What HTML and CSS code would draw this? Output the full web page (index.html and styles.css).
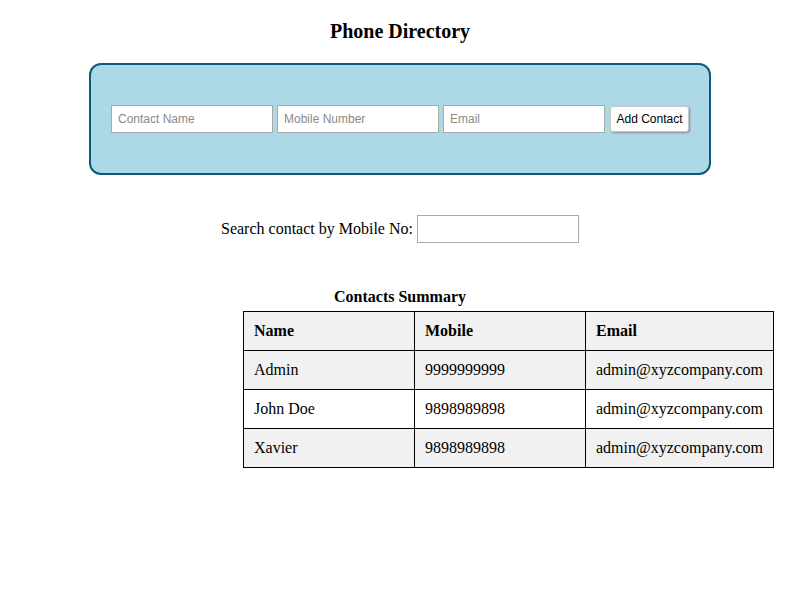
FILE: index.html
```html
<!DOCTYPE html>
<html>
<head>
<meta charset="utf-8">
<link rel="stylesheet" href="styles.css">
</head>
<body>
<h1 class="title">Phone Directory</h1>
<div class="form-box">
  <input class="field" type="text" placeholder="Contact Name">
  <input class="field" type="text" placeholder="Mobile Number">
  <input class="field" type="text" placeholder="Email">
  <button class="add-btn">Add Contact</button>
</div>
<div class="search-row">
  <label class="search-label">Search contact by Mobile No:</label>
  <input class="search-input" type="text">
</div>
<div class="summary">
  <div class="caption">Contacts Summary</div>
  <table class="contacts">
    <thead>
      <tr class="head-row"><th class="c-name">Name</th><th class="c-mobile">Mobile</th><th>Email</th></tr>
    </thead>
    <tbody>
      <tr><td>Admin</td><td>9999999999</td><td>admin@xyzcompany.com</td></tr>
      <tr><td>John Doe</td><td>9898989898</td><td>admin@xyzcompany.com</td></tr>
      <tr><td>Xavier</td><td>9898989898</td><td>admin@xyzcompany.com</td></tr>
    </tbody>
  </table>
</div>
</body>
</html>
```
FILE: styles.css
```css
body {
  margin: 0;
  font-family: "Liberation Serif", "Times New Roman", serif;
  font-size: 16px;
  color: #000;
  background: #fff;
}
.title {
  margin: 20px 0 20px;
  font-size: 20px;
  line-height: 23px;
  text-align: center;
  font-weight: bold;
}
.form-box {
  width: 578px;
  margin: 0 auto;
  padding: 40px 20px;
  border: 2px solid #0b5a78;
  border-radius: 12px;
  background: #add8e6;
  display: flex;
  align-items: center;
  gap: 4px;
}
.field {
  box-sizing: border-box;
  width: 162px;
  height: 28px;
  margin: 0;
  padding: 0 6px;
  border: 1px solid #a9a9a9;
  background: #fff;
  font-family: "Liberation Sans", Arial, sans-serif;
  font-size: 12px;
  outline: none;
}
.field::placeholder {
  color: #8a8a8a;
}
.add-btn {
  box-sizing: border-box;
  margin-left: 1px;
  height: 26px;
  width: 79px;
  padding: 0;
  border: 1px solid #c8c8c8;
  border-radius: 3px;
  background: #fff;
  box-shadow: 1px 1px 2px #8a8a8a;
  font-family: "Liberation Sans", Arial, sans-serif;
  font-size: 12px;
  color: #000;
}
.search-row {
  margin-top: 40px;
  display: flex;
  justify-content: center;
  align-items: center;
  gap: 4px;
}
.search-label {
  line-height: 18px;
}
.search-input {
  box-sizing: border-box;
  width: 162px;
  height: 28px;
  margin: 0;
  border: 1px solid #a9a9a9;
  background: #fff;
}
.summary {
  width: 314px;
  margin: 45px auto 0;
}
.caption {
  text-align: center;
  font-weight: bold;
  line-height: 18px;
  padding-bottom: 5px;
}
.contacts {
  border-collapse: collapse;
  white-space: nowrap;
  width: 531px;
}
.contacts th,
.contacts td {
  border: 1px solid #000;
  padding: 10px;
  line-height: 18px;
  text-align: left;
}
.contacts .c-name,
.contacts .c-mobile {
  width: 150px;
}
.contacts .head-row,
.contacts tbody tr:nth-child(odd) {
  background: #f1f1f1;
}
```
